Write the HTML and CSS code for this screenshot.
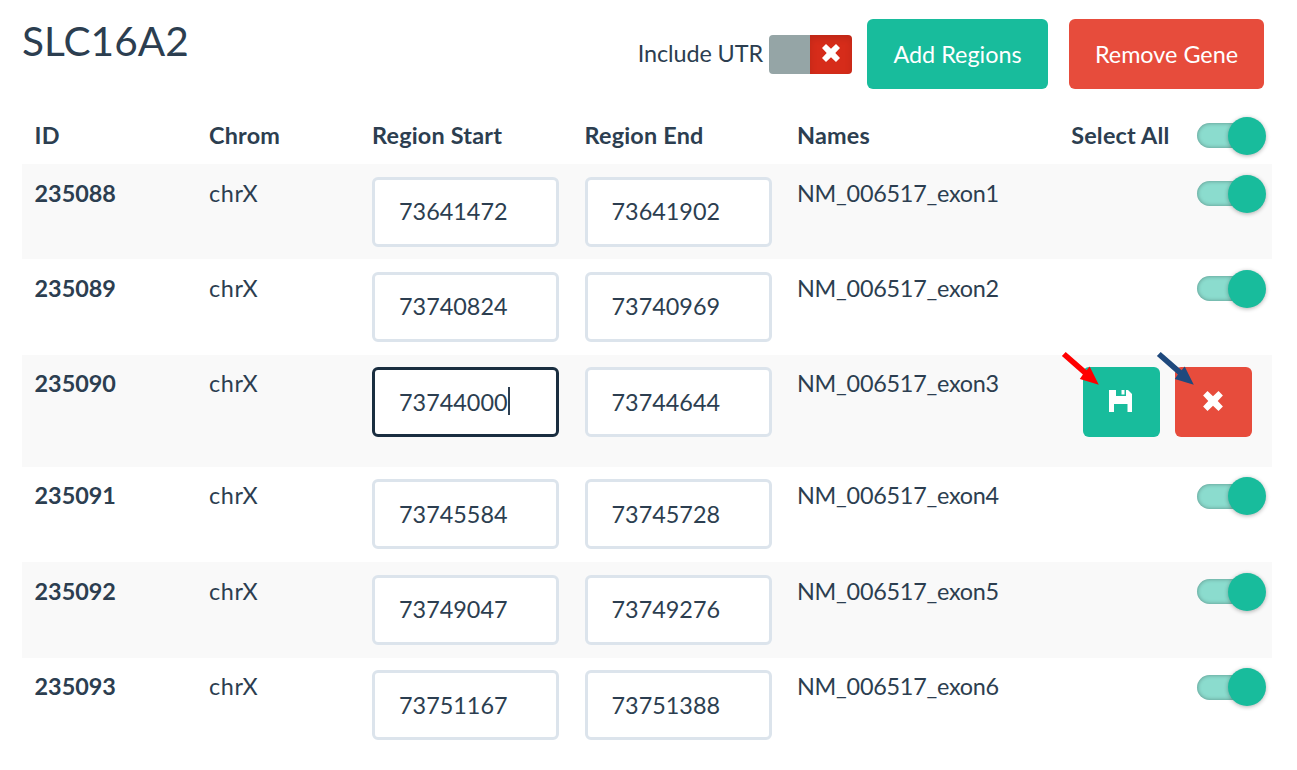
FILE: index.html
```html
<!DOCTYPE html>
<html lang="en">
  <head>
    <meta charset="UTF-8" />
    <meta name="viewport" content="width=device-width, initial-scale=1.0" />
    <title>SLC16A2 Regions</title>
    <link rel="stylesheet" href="styles.css">
  </head>
  <body>
    <div class="container">
      <div class="gene-header">
        <h3>SLC16A2</h3>
        <div class="gene-actions">
          <span class="utr-label">Include UTR</span>
          <div class="utr-toggle">
            <div class="utr-handle"></div>
            <div class="utr-off">
              <svg width="20" height="20" viewBox="0 0 20 20"><path d="M1 5 5 1l5 4.7L15 1l4 4-4.7 5 4.7 5-4 4-5-4.7L5 19l-4-4 4.7-5z" fill="#fff" /></svg>
            </div>
          </div>
          <button type="button" class="btn btn-success btn-add">Add Regions</button>
          <button type="button" class="btn btn-danger btn-remove">Remove Gene</button>
        </div>
      </div>
      <table class="regions">
        <colgroup>
          <col class="col-id" />
          <col class="col-chrom" />
          <col class="col-region" />
          <col class="col-region" />
          <col class="col-names" />
          <col />
        </colgroup>
        <thead>
          <tr>
            <th>ID</th>
            <th>Chrom</th>
            <th>Region Start</th>
            <th>Region End</th>
            <th>Names</th>
            <th><div class="select-cell"><span class="select-all">Select All</span><div class="switch"></div></div></th>
          </tr>
        </thead>
        <tbody>
          <tr>
            <th>235088</th>
            <td class="chrom">chrX</td>
            <td><input type="text" class="form-control" value="73641472" /></td>
            <td><input type="text" class="form-control" value="73641902" /></td>
            <td class="name">NM_006517_exon1</td>
            <td><div class="select-cell"><div class="switch"></div></div></td>
          </tr>
          <tr>
            <th>235089</th>
            <td class="chrom">chrX</td>
            <td><input type="text" class="form-control" value="73740824" /></td>
            <td><input type="text" class="form-control" value="73740969" /></td>
            <td class="name">NM_006517_exon2</td>
            <td><div class="select-cell"><div class="switch"></div></div></td>
          </tr>
          <tr class="editing">
            <th>235090</th>
            <td class="chrom">chrX</td>
            <td>
              <div class="edit-field">
                <input type="text" class="form-control active" value="73744000" />
                <span class="caret"></span>
              </div>
            </td>
            <td><input type="text" class="form-control" value="73744644" /></td>
            <td class="name">NM_006517_exon3</td>
            <td>
              <div class="edit-buttons">
                <button type="button" class="btn btn-success btn-icon" aria-label="Save">
                  <svg width="24" height="24" viewBox="0 0 24 24"><path d="M0 1h7v6h10V1h2l4 4v18h-4.500v-8H5v8H0z" fill="#fff" /><path d="M12.500 1h3v4.500h-3z" fill="#fff" /></svg>
                </button>
                <button type="button" class="btn btn-danger btn-icon" aria-label="Cancel">
                  <svg width="22" height="22" viewBox="0 0 20 20"><path d="M1 5 5 1l5 4.700L15 1l4 4-4.700 5 4.700 5-4 4-5-4.700L5 19l-4-4 4.700-5z" fill="#fff" /></svg>
                </button>
                <svg class="arrow arrow-save" width="40" height="36" viewBox="0 0 40 36"><path d="M4.700 0 25.600 18.300 28.700 14.500 37.800 32.800 18.800 27.100 21.900 22.500.9 4z" fill="#f00" /></svg>
                <svg class="arrow arrow-cancel" width="40" height="36" viewBox="0 0 40 36"><path d="M4.700 0 25.600 18.300 28.700 14.500 37.800 32.800 18.800 27.100 21.900 22.500.9 4z" fill="#1f497d" /></svg>
              </div>
            </td>
          </tr>
          <tr>
            <th>235091</th>
            <td class="chrom">chrX</td>
            <td><input type="text" class="form-control" value="73745584" /></td>
            <td><input type="text" class="form-control" value="73745728" /></td>
            <td class="name">NM_006517_exon4</td>
            <td><div class="select-cell"><div class="switch"></div></div></td>
          </tr>
          <tr>
            <th>235092</th>
            <td class="chrom">chrX</td>
            <td><input type="text" class="form-control" value="73749047" /></td>
            <td><input type="text" class="form-control" value="73749276" /></td>
            <td class="name">NM_006517_exon5</td>
            <td><div class="select-cell"><div class="switch"></div></div></td>
          </tr>
          <tr>
            <th>235093</th>
            <td class="chrom">chrX</td>
            <td><input type="text" class="form-control" value="73751167" /></td>
            <td><input type="text" class="form-control" value="73751388" /></td>
            <td class="name">NM_006517_exon6</td>
            <td><div class="select-cell"><div class="switch"></div></div></td>
          </tr>
        </tbody>
      </table>
    </div>
  </body>
</html>
```
FILE: styles.css
```css
* {
  box-sizing: border-box;
}
body {
  font-family: Lato, sans-serif;
  font-size: 23.4px;
  line-height: 33px;
  color: #2c3e50;
  margin: 0;
  background-color: #fff;
}
.container {
  width: 1250px;
  margin-left: 22px;
}
.gene-header {
  display: flex;
  justify-content: space-between;
  height: 106px;
  padding: 19px 8px 0 0;
}
.gene-header h3 {
  margin: 0;
  font-size: 40.6px;
  font-weight: 400;
  line-height: 43px;
}
.gene-actions {
  display: flex;
  align-items: center;
  height: 70px;
}
.utr-label {
  margin-right: 6px;
  padding-bottom: 1px;
  letter-spacing: -0.1px;
}
.utr-toggle {
  display: flex;
  width: 83px;
  height: 39px;
  border-radius: 4px;
  overflow: hidden;
}
.utr-handle {
  width: 41px;
  background-color: #95a5a6;
}
.utr-off {
  flex: 1;
  display: flex;
  align-items: center;
  justify-content: center;
  background-color: #d62c1a;
  box-shadow: inset 0 3px 7px rgba(0, 0, 0, 0.125);
  padding-bottom: 3px;
}
.btn {
  height: 70px;
  padding: 0 0 1px;
  border: none;
  border-radius: 6px;
  color: #fff;
  font-family: inherit;
  font-size: inherit;
  cursor: pointer;
}
.btn-success {
  background-color: #18bc9c;
}
.btn-danger {
  background-color: #e74c3c;
}
.btn-add {
  width: 181px;
  margin-left: 15px;
}
.btn-remove {
  width: 195px;
  margin-left: 21px;
}
.regions {
  width: 100%;
  table-layout: fixed;
  border-collapse: collapse;
}
.col-id {
  width: 174.5px;
}
.col-chrom {
  width: 163px;
}
.col-region {
  width: 212.5px;
}
.col-names {
  width: 274.5px;
}
.regions th,
.regions td {
  padding: 12.5px;
  text-align: left;
  vertical-align: top;
}
.regions thead th {
  height: 58px;
  letter-spacing: 0.2px;
}
.regions tbody tr {
  height: 95.4px;
}
.regions tbody tr.editing {
  height: 112px;
}
.regions tbody tr:nth-child(odd) {
  background-color: #f9f9f9;
}
.regions .chrom {
  letter-spacing: 0.7px;
}
.regions .name {
  letter-spacing: -0.25px;
}
.form-control {
  display: block;
  width: 187px;
  height: 70px;
  padding: 0 24px 1px;
  border: 3px solid #dce4ec;
  border-radius: 6px;
  background-color: #fff;
  color: #2c3e50;
  font-family: inherit;
  font-size: inherit;
  outline: none;
}
.form-control.active {
  border-color: #1a2e40;
}
.edit-field {
  position: relative;
}
.caret {
  position: absolute;
  left: 136px;
  top: 20px;
  width: 1.5px;
  height: 28px;
  background-color: #2c3e50;
}
.select-cell {
  display: flex;
  align-items: center;
  justify-content: flex-end;
  height: 34px;
  margin-bottom: -1px;
}
.select-all {
  margin-right: 27px;
  padding-bottom: 1px;
  white-space: nowrap;
}
.switch {
  flex-shrink: 0;
  position: relative;
  width: 65px;
  height: 25px;
  margin-right: -2px;
  border-radius: 13px;
  background-color: #8bdcce;
  box-shadow: inset 0 0 4px rgba(0, 0, 0, 0.35);
}
.switch::after {
  content: "";
  position: absolute;
  top: -6.5px;
  right: -4px;
  width: 38px;
  height: 38px;
  border-radius: 50%;
  background-color: #18bc9c;
  box-shadow: 0 1px 4px rgba(0, 0, 0, 0.3);
}
.edit-buttons {
  position: relative;
  display: flex;
  justify-content: flex-end;
  gap: 15px;
  margin-right: 8px;
}
.btn-icon {
  display: flex;
  align-items: center;
  justify-content: center;
  width: 77px;
  padding-bottom: 3px;
}
.arrow {
  position: absolute;
  top: -15px;
}
.arrow-save {
  left: -11px;
}
.arrow-cancel {
  left: 84px;
}
```
